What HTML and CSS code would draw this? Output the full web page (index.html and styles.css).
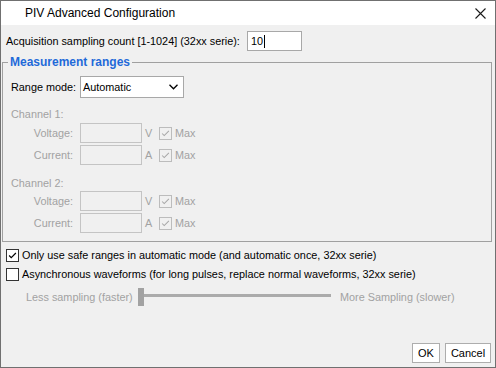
FILE: index.html
```html
<!DOCTYPE html>
<html>
<head>
  <meta charset="utf-8">
  <title>PIV Advanced Configuration</title>
  <link rel="stylesheet" href="styles.css">
</head>
<body>
<div class=window>
  <div class=titlebar>
    <span>PIV Advanced Configuration</span>
    <svg class=close width="11" height="11" viewBox="0 0 11 11"><path d="M0.5 0.5L10.5 10.5M10.5 0.5L0.5 10.5" stroke="#1a1a1a" stroke-width="1.1" fill="none"/></svg>
  </div>

  <div class=acq>
    <span class=acqlabel>Acquisition sampling count [1-1024] (32xx serie):</span>
    <div class="field acqfield">10<span class=caret></span></div>
  </div>

  <fieldset class=group>
    <legend>Measurement ranges</legend>
    <div class=range>
      <span class=rlabel>Range mode:</span>
      <div class=select>Automatic
        <svg class=chev width="9" height="6" viewBox="0 0 9 6"><path d="M0.5 0.8L4.5 4.8L8.5 0.8" stroke="#000" stroke-width="1.3" fill="none"/></svg>
      </div>
    </div>

    <div class="chan first">Channel 1:</div>
    <div class=line>
      <span class=lbl>Voltage:</span><div class="field off"></div><span class=unit>V</span>
      <span class="cb off"><svg viewBox="0 0 13 13"><path d="M2.5 6.5L5 9L10.5 3.5" stroke="#a6a6a6" stroke-width="1.2" fill="none"/></svg></span><span class=max>Max</span>
    </div>
    <div class=line>
      <span class=lbl>Current:</span><div class="field off"></div><span class=unit>A</span>
      <span class="cb off"><svg viewBox="0 0 13 13"><path d="M2.5 6.5L5 9L10.5 3.5" stroke="#a6a6a6" stroke-width="1.2" fill="none"/></svg></span><span class=max>Max</span>
    </div>

    <div class="chan second">Channel 2:</div>
    <div class="line tight">
      <span class=lbl>Voltage:</span><div class="field off"></div><span class=unit>V</span>
      <span class="cb off"><svg viewBox="0 0 13 13"><path d="M2.5 6.5L5 9L10.5 3.5" stroke="#a6a6a6" stroke-width="1.2" fill="none"/></svg></span><span class=max>Max</span>
    </div>
    <div class=line>
      <span class=lbl>Current:</span><div class="field off"></div><span class=unit>A</span>
      <span class="cb off"><svg viewBox="0 0 13 13"><path d="M2.5 6.5L5 9L10.5 3.5" stroke="#a6a6a6" stroke-width="1.2" fill="none"/></svg></span><span class=max>Max</span>
    </div>
  </fieldset>

  <div class="opt first">
    <span class=cb><svg viewBox="0 0 13 13"><path d="M2.5 6.5L5 9L10.5 3.5" stroke="#000" stroke-width="1.4" fill="none"/></svg></span>
    <span>Only use safe ranges in automatic mode (and automatic once, 32xx serie)</span>
  </div>
  <div class=opt>
    <span class=cb></span>
    <span>Asynchronous waveforms (for long pulses, replace normal waveforms, 32xx serie)</span>
  </div>

  <div class=slider>
    <span class=less>Less sampling (faster)</span>
    <span class=thumb></span>
    <span class=track></span>
    <span>More Sampling (slower)</span>
  </div>

  <div class=actions>
    <button class=ok>OK</button>
    <button class=cancel>Cancel</button>
  </div>
</div>
</body>
</html>
```

FILE: styles.css
```css
body {margin:0; font-family:"Liberation Sans", Arial, sans-serif; font-size:10.85px; color:#000;}
.window {width:496px; height:368px; box-sizing:border-box; border:1px solid #707070; background:#f0f0f0; display:flex; flex-direction:column;}

.titlebar {height:24px; flex:none; background:#fff; display:flex; align-items:center; padding-left:24px; font-size:12px;}
.close {margin-left:auto; margin-right:9px;}

.acq {display:flex; align-items:center; height:20px; margin:6px 0 0 5px;}
.acqlabel {width:241px;}
.field {box-sizing:border-box; height:20px; border:1px solid #a8a8a8; background:#fff;}
.acqfield {width:55px; padding-left:3px; line-height:18px; display:flex; align-items:center;}
.caret {display:inline-block; width:1px; height:13px; background:#000; margin-left:1px;}

.group {margin:5px 3px 0 1px; padding:7px 8px 8px 8px; border:1px solid #a0a0a0; min-width:0;}
.group legend {font-weight:bold; font-size:12px; line-height:13px; color:#1f6ad9; padding:0 2px; margin-left:-3px;}

.range {display:flex; align-items:center; height:22px;}
.rlabel {width:69px;}
.select {box-sizing:border-box; width:104px; height:22px; border:1px solid #a8a8a8; background:#fff; display:flex; align-items:center; padding-left:2px;}
.chev {margin-left:auto; margin-right:5px;}

.chan {color:#a2a2a2; line-height:14px;}
.chan.first {margin-top:9px;}
.chan.second {margin-top:11px;}
.line {display:flex; align-items:center; height:20px; margin-top:2px; color:#a2a2a2;}
.line.tight {margin-top:1px;}
.lbl {width:62px; text-align:right;}
.line .field {width:62px; margin-left:7px; border-color:#c4c4c4; background:#f0f0f0;}
.unit {width:17px; padding-left:3px; box-sizing:border-box;}
.max {margin-left:3px;}

.cb {box-sizing:border-box; width:13px; height:13px; border:1px solid #333; background:#fff; display:inline-flex; flex:none;}
.cb svg {width:11px; height:11px;}
.cb.off {border-color:#bcbcbc; background:#f0f0f0;}

.opt {display:flex; align-items:center; height:16px; margin:3px 0 0 5px;}
.opt.first {margin-top:5px;}
.opt .cb {margin-right:3px;}

.slider {display:flex; height:18px; margin:6px 0 0 25px; color:#a2a2a2; align-items:center;}
.less {width:112px;}
.thumb {width:6px; height:18px; background:#a2a2a2;}
.track {width:187px; height:3px; background:#ababab; align-self:flex-start; margin-top:6px; margin-right:9px;}

.actions {margin-top:auto; display:flex; justify-content:flex-end; gap:5px; padding:0 4px 4px 0;}
.actions button {box-sizing:border-box; height:20px; border:1px solid #adadad; background:#fff; font-family:inherit; font-size:11px; padding:0; color:#000;}
.ok {width:28px;}
.cancel {width:46px;}
```
